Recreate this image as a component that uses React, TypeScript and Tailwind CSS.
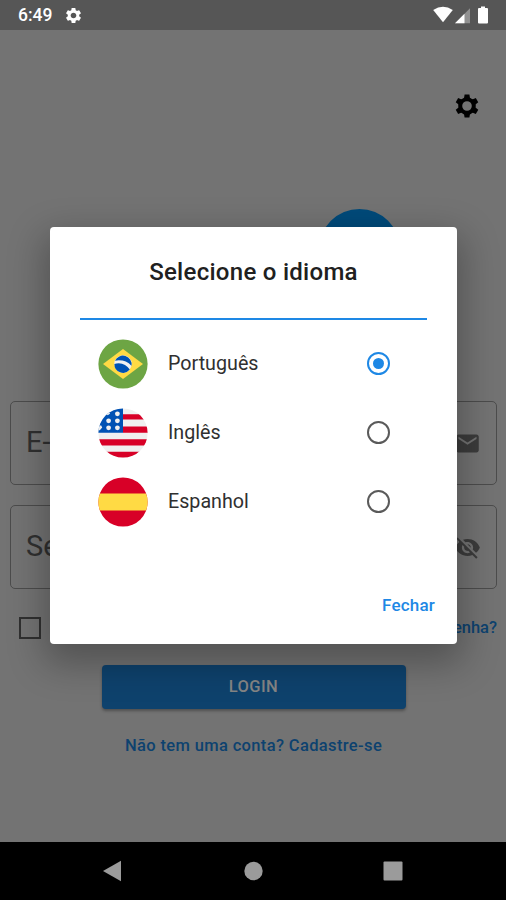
import React, { useState } from 'react';
import { MdEmail, MdSettings, MdVisibilityOff } from 'react-icons/md';

type LanguageCode = 'pt' | 'en' | 'es';

const BrazilFlag: React.FC = () => (
    <svg viewBox="0 0 50 50" className="h-[50px] w-[50px]">
        <circle cx="25" cy="25" r="24.6" fill="#6da544" />
        <path d="M25 10 45 25 25 40 5 25Z" fill="#ffda44" />
        <circle cx="25" cy="25" r="8.7" fill="#f0f0f0" />
        <path d="M20.7 24.3c-1.5 0-3 .2-4.3.6a8.7 8.7 0 0 0 15.4 5.7 14.6 14.6 0 0 0-11.1-6.3ZM33.5 26.7A8.7 8.7 0 0 0 17 21.7a18 18 0 0 1 3.7-.4 17.4 17.4 0 0 1 12.8 5.4Z" fill="#0052b4" />
    </svg>
);

const UsaFlag: React.FC = () => (
    <svg viewBox="0 0 50 50" className="h-[50px] w-[50px]">
        <clipPath id="usa-round"><circle cx="25" cy="25" r="24.6" /></clipPath>
        <g clipPath="url(#usa-round)">
            <rect width="50" height="50" fill="#f0f0f0" />
            <path d="M25 6.2h25v5.4H25ZM25 18.5h25v6.3H25ZM0 31.2h50v6.2H0ZM0 43.7h50V50H0Z" fill="#d80027" />
            <path d="M0 0h25v24.8H0Z" fill="#0052b4" />
            {/* stars cut by the round edge */}
            <path d="M0 17.5h3.2l1 2-2.4 2.8H0ZM10 3.2l2.2 2.2-2.4 1.8-2.2-1.4Z" fill="#f0f0f0" />
            <g fill="#f0f0f0">
                <circle cx="19.4" cy="5.8" r="2.4" />
                <circle cx="10.6" cy="12.8" r="2.4" />
                <circle cx="19.4" cy="12.8" r="2.4" />
                <circle cx="10.6" cy="19.8" r="2.4" />
                <circle cx="19.4" cy="19.8" r="2.4" />
            </g>
        </g>
    </svg>
);

const SpainFlag: React.FC = () => (
    <svg viewBox="0 0 50 50" className="h-[50px] w-[50px]">
        <circle cx="25" cy="25" r="24.6" fill="#d80027" />
        <path d="M1.9 16.5A24.6 24.6 0 0 0 1.9 33.6H48.1A24.6 24.6 0 0 0 48.1 16.5Z" fill="#ffda44" />
    </svg>
);

const GearIcon: React.FC = () => (
    <svg viewBox="0 0 24 24" className="h-[24px] w-[24px]">
        <circle cx="12" cy="12" r="6.8" fill="none" stroke="#000" strokeWidth="4" />
        <g fill="#000">
            <path id="tooth" d="M9.6.4h4.8l.7 4.4H8.9Z" />
            <use href="#tooth" transform="rotate(60 12 12)" />
            <use href="#tooth" transform="rotate(120 12 12)" />
            <use href="#tooth" transform="rotate(180 12 12)" />
            <use href="#tooth" transform="rotate(240 12 12)" />
            <use href="#tooth" transform="rotate(300 12 12)" />
        </g>
    </svg>
);

const languages: Array<{ code: LanguageCode; label: string; Flag: React.FC }> = [
    { code: 'pt', label: 'Português', Flag: BrazilFlag },
    { code: 'en', label: 'Inglês', Flag: UsaFlag },
    { code: 'es', label: 'Espanhol', Flag: SpainFlag },
];

const StatusBar: React.FC = () => (
    <header className="flex h-[30px] items-center bg-[#565656] pr-[14px] pl-[18px] text-white">
        <span className="text-[17.5px] leading-[30px] font-medium">6:49</span>
        <MdSettings className="ml-[12px] h-[19px] w-[19px]" />
        <svg viewBox="0 0 60 20" className="ml-auto h-[20px] w-[60px]" fill="currentColor">
            <path d="M1.2 5Q11-1.5 20.8 5L11 17.3Z" />
            <path d="M38 3.2v15H23Z" opacity=".35" />
            <path d="M32.5 8.7v9.5H23Z" />
            <path d="M47 3h2V1.5h4V3h2q1 0 1 1v13.5q0 1-1 1h-8q-1 0-1-1V4q0-1 1-1Z" />
        </svg>
    </header>
);

const Field: React.FC<{ label: string; children: React.ReactNode }> = ({ label, children }) => (
    <div className="flex h-[84px] items-center justify-between rounded-[5px] border-[1.5px] border-[#4c4c4c] pr-[15px] pl-[15px]">
        <span className="text-[29px] font-normal text-[#303030]">{label}</span>
        {children}
    </div>
);

const LoginScreen: React.FC = () => (
    <main className="flex flex-1 flex-col bg-[#737373] pr-[9px] pl-[10px]">
        <div className="flex h-[150px] justify-end pt-[64px] pr-[18px]">
            <GearIcon />
        </div>
        <div className="flex h-[221px] justify-end pt-[29px] pr-[97px]">
            <div className="h-[81px] w-[81px] rounded-full bg-[#004a7a]" />
        </div>
        <div className="flex flex-col gap-[20px]">
            <Field label="E-mail"><MdEmail className="h-[27px] w-[27px] text-[#3c3c3c]" /></Field>
            <Field label="Senha"><MdVisibilityOff className="h-[27px] w-[27px] text-[#3c3c3c]" /></Field>
        </div>
        <div className="mt-[25px] flex h-[27px] items-center justify-between pl-[9px]">
            <span className="h-[22px] w-[22px] border-2 border-[#303030]" />
            <span className="pt-[2px] text-[16.5px] font-medium text-[#0d426f]">senha?</span>
        </div>
        <button className="mx-auto mt-[24px] flex h-[44px] w-[304px] shrink-0 items-center justify-center rounded-[4px] bg-[#0e426d] text-[16.5px] font-medium tracking-[0.4px] text-[#858585] shadow-[0_2px_3px_#00000050]">
            LOGIN
        </button>
        <p className="mt-[25px] text-center text-[16.5px] leading-[24px] font-medium tracking-[0.36px] text-[#0d426f]">
            Não tem uma conta? Cadastre-se
        </p>
    </main>
);

const LanguageDialog: React.FC = () => {
    const [selected, setSelected] = useState<LanguageCode>('pt');

    return (
        <section className="absolute top-[227px] left-[50px] flex h-[417px] w-[407px] flex-col rounded-[4px] bg-white px-[30px] shadow-[0_14px_36px_6px_#00000048]">
            <h1 className="mt-[28px] text-center text-[24px] leading-[34px] font-medium tracking-[0.28px] text-[#202020]">Selecione o idioma</h1>
            <div className="mt-[29px] h-[2px] bg-[#1e88e5]" />
            <div className="flex flex-col pt-[9px]">
                {languages.map(({ code, label, Flag }) => (
                    <button key={code} onClick={() => setSelected(code)} className="flex h-[69px] items-center pr-[37px] pl-[18px]">
                        <Flag />
                        <span className="ml-[20px] text-[19.7px] text-[#303030]">{label}</span>
                        <span className={`ml-auto flex h-[23px] w-[23px] items-center justify-center rounded-full border-[2.3px] ${selected === code ? 'border-[#1e88e5]' : 'border-[#5a5a5a]'}`}>
                            {selected === code && <span className="h-[11px] w-[11px] rounded-full bg-[#1e88e5]" />}
                        </span>
                    </button>
                ))}
            </div>
            <button className="mt-[57px] mr-[-8px] self-end text-[17px] leading-[24px] font-medium tracking-[0.2px] text-[#1e88e5]">Fechar</button>
        </section>
    );
};

const NavigationBar: React.FC = () => (
    <nav className="flex h-[58px] items-center justify-between bg-black pr-[103px] pl-[102px] text-[#9b9b9b]">
        <svg viewBox="0 0 20 22" className="h-[22px] w-[20px]" fill="currentColor"><path d="M1 11 19 .8v20.4Z" /></svg>
        <svg viewBox="0 0 20 20" className="h-[20px] w-[20px]" fill="currentColor"><circle cx="10.5" cy="10" r="9.2" /></svg>
        <svg viewBox="0 0 20 20" className="h-[20px] w-[20px]" fill="currentColor"><rect x=".5" y=".5" width="19" height="19" rx="1" /></svg>
    </nav>
);

export default function App() {
    return (
        <div className="relative flex h-[900px] w-[506px] flex-col overflow-hidden font-['Roboto',sans-serif]">
            <StatusBar />
            <LoginScreen />
            <NavigationBar />
            <LanguageDialog />
        </div>
    );
}
